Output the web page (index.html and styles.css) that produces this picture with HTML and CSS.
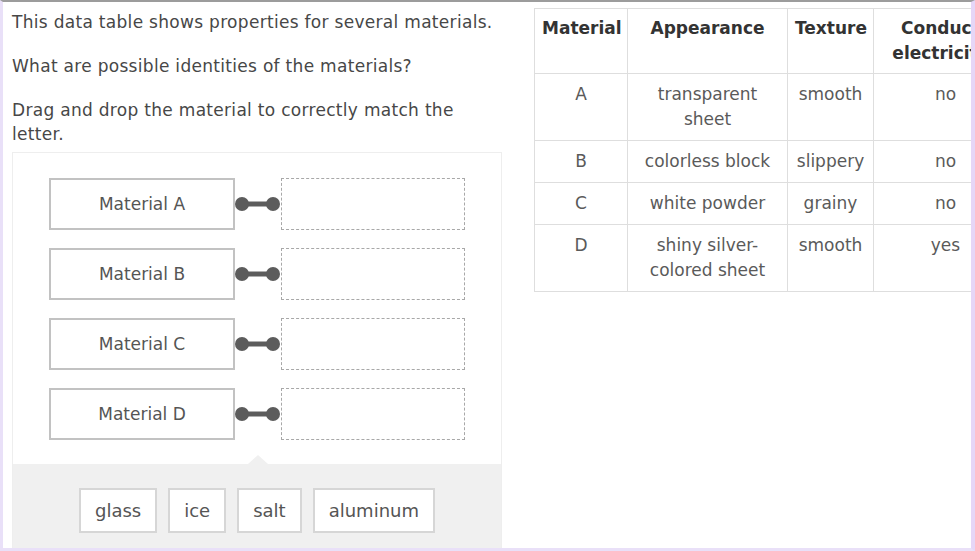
FILE: index.html
```html
<!DOCTYPE html>
<html>
<head>
<meta charset="utf-8">
<link rel="stylesheet" href="styles.css">
</head>
<body>
<div class="frame">
  <div class="left">
    <p class="q">This data table shows properties for several materials.</p>
    <p class="q">What are possible identities of the materials?</p>
    <p class="q last">Drag and drop the material to correctly match the letter.</p>
    <div class="panel">
      <div class="match">
        <div class="row">
          <div class="label">Material A</div>
          <svg class="link" width="46" height="16" viewBox="0 0 46 16"><line x1="7" y1="8" x2="38" y2="8" stroke="#5c5c5c" stroke-width="5"/><circle cx="7" cy="8" r="7" fill="#5c5c5c"/><circle cx="38" cy="8" r="7" fill="#5c5c5c"/></svg>
          <div class="drop"></div>
        </div>
        <div class="row">
          <div class="label">Material B</div>
          <svg class="link" width="46" height="16" viewBox="0 0 46 16"><line x1="7" y1="8" x2="38" y2="8" stroke="#5c5c5c" stroke-width="5"/><circle cx="7" cy="8" r="7" fill="#5c5c5c"/><circle cx="38" cy="8" r="7" fill="#5c5c5c"/></svg>
          <div class="drop"></div>
        </div>
        <div class="row">
          <div class="label">Material C</div>
          <svg class="link" width="46" height="16" viewBox="0 0 46 16"><line x1="7" y1="8" x2="38" y2="8" stroke="#5c5c5c" stroke-width="5"/><circle cx="7" cy="8" r="7" fill="#5c5c5c"/><circle cx="38" cy="8" r="7" fill="#5c5c5c"/></svg>
          <div class="drop"></div>
        </div>
        <div class="row">
          <div class="label">Material D</div>
          <svg class="link" width="46" height="16" viewBox="0 0 46 16"><line x1="7" y1="8" x2="38" y2="8" stroke="#5c5c5c" stroke-width="5"/><circle cx="7" cy="8" r="7" fill="#5c5c5c"/><circle cx="38" cy="8" r="7" fill="#5c5c5c"/></svg>
          <div class="drop"></div>
        </div>
      </div>
      <div class="bank">
        <div class="chip">glass</div>
        <div class="chip">ice</div>
        <div class="chip">salt</div>
        <div class="chip">aluminum</div>
      </div>
    </div>
  </div>
  <div class="right">
    <table class="data">
      <colgroup>
        <col class="c1"><col class="c2"><col class="c3"><col class="c4">
      </colgroup>
      <thead>
        <tr><th>Material</th><th>Appearance</th><th>Texture</th><th>Conducts electricity?</th></tr>
      </thead>
      <tbody>
        <tr><td>A</td><td>transparent sheet</td><td>smooth</td><td>no</td></tr>
        <tr><td>B</td><td>colorless block</td><td>slippery</td><td>no</td></tr>
        <tr><td>C</td><td>white powder</td><td>grainy</td><td>no</td></tr>
        <tr><td>D</td><td>shiny silver-colored sheet</td><td>smooth</td><td>yes</td></tr>
      </tbody>
    </table>
  </div>
</div>
</body>
</html>
```

FILE: styles.css
```css
html, body {
  margin: 0;
  padding: 0;
  background: #ffffff;
}

body {
  font-family: "DejaVu Sans", "Liberation Sans", sans-serif;
  color: #474747;
}

.frame {
  width: 975px;
  height: 551px;
  box-sizing: border-box;
  border-top: 2px solid #9c9c9c;
  border-left: 3px solid #e9e0f8;
  border-right: 4px solid #e6d6f7;
  border-bottom: 3px solid #e9e0f8;
  overflow: hidden;
  display: flex;
  gap: 32px;
  padding-left: 9px;
}

.left {
  width: 490px;
  flex: none;
  display: flex;
  flex-direction: column;
  padding-top: 8px;
}

.q {
  margin: 0 0 20px;
  font-size: 17px;
  line-height: 24px;
  letter-spacing: 0.3px;
  color: #474747;
}

.q.last {
  margin-bottom: 6px;
}

.panel {
  flex: 1;
  display: flex;
  flex-direction: column;
  border: 1px solid #eeeeee;
  border-bottom: none;
}

.match {
  padding: 25px 36px 24px;
  display: flex;
  flex-direction: column;
  gap: 18px;
}

.row {
  display: flex;
  align-items: center;
  height: 52px;
}

.label {
  width: 186px;
  height: 52px;
  box-sizing: border-box;
  border: 2px solid #c2c2c2;
  display: flex;
  align-items: center;
  justify-content: center;
  font-size: 17px;
  color: #555555;
}

.link {
  display: block;
  flex: none;
}

.drop {
  width: 184px;
  height: 52px;
  box-sizing: border-box;
  border: 1px dashed #a8a8a8;
}

.bank {
  flex: 1;
  position: relative;
  background: #f0f0f0;
  display: flex;
  justify-content: center;
  align-items: flex-start;
  gap: 11px;
  padding-top: 24px;
}

.bank::before {
  content: "";
  position: absolute;
  top: -9px;
  left: 235px;
  border-left: 10px solid transparent;
  border-right: 10px solid transparent;
  border-bottom: 9px solid #f0f0f0;
}

.chip {
  height: 45px;
  box-sizing: border-box;
  padding: 0 14px;
  background: #ffffff;
  border: 2px solid #d6d6d6;
  display: flex;
  align-items: center;
  font-size: 18px;
  color: #555555;
}

.right {
  flex: none;
  padding-top: 6px;
}

.data {
  border-collapse: collapse;
  table-layout: fixed;
  width: 483px;
}

.c1 { width: 93px; }
.c2 { width: 160px; }
.c3 { width: 86px; }
.c4 { width: 144px; }

.data th,
.data td {
  border: 1px solid #dedede;
  text-align: center;
  vertical-align: top;
  padding: 8px 7px;
  font-size: 17px;
  line-height: 25px;
}

.data th {
  font-weight: bold;
  color: #333333;
  line-height: 25px;
  padding: 7px 7px;
}

.data td {
  color: #5a5a5a;
}
```
